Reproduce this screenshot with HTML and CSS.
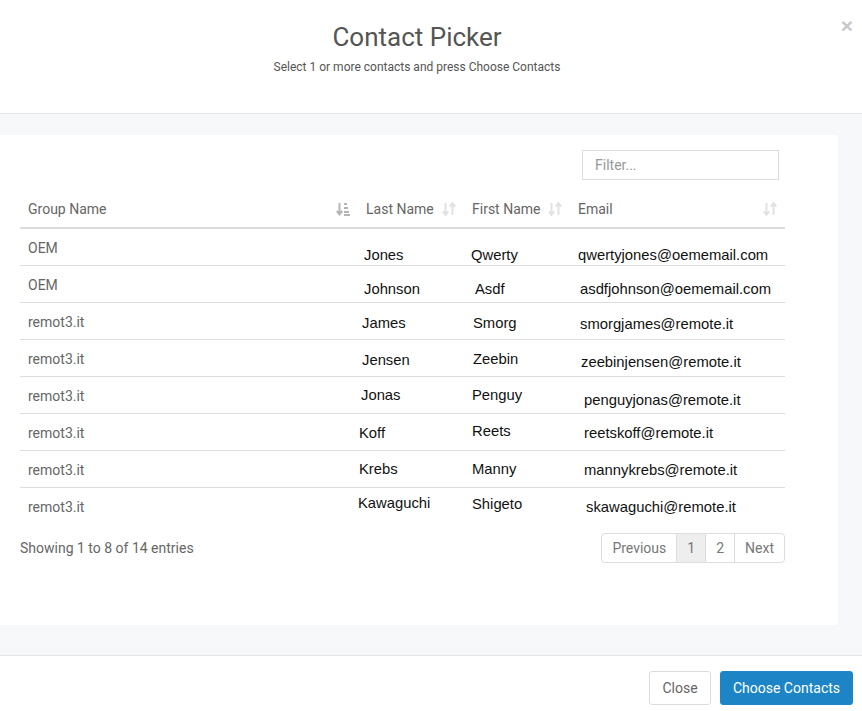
FILE: index.html
```html
<!DOCTYPE html>
<html>
<head>
<meta charset="utf-8">
<link rel="stylesheet" href="styles.css">
</head>
<body>
<div class="modal">
  <header class="modal-header">
    <h1 class="title">Contact Picker</h1>
    <p class="subtitle">Select 1 or more contacts and press Choose Contacts</p>
    <span class="close-x">&times;</span>
  </header>
  <main class="modal-body">
    <section class="panel">
      <div class="filter-row">
        <input class="filter" type="text" placeholder="Filter...">
      </div>
      <div class="grid">
        <div class="row head">
          <div class="th"><span>Group Name</span>
            <svg class="sort active" viewBox="0 0 14 14" width="14" height="14"><path d="M3.5 1v11M0.8 9l2.7 3.3L6.2 9" fill="none" stroke="currentColor" stroke-width="2"/><rect x="8" y="1" width="3" height="2" fill="currentColor"/><rect x="8" y="5" width="4" height="2" fill="currentColor"/><rect x="8" y="9" width="5" height="2" fill="currentColor"/><rect x="8" y="12" width="6" height="2" fill="currentColor"/></svg>
          </div>
          <div class="th"><span>Last Name</span>
            <svg class="sort" viewBox="0 0 14 14" width="14" height="14"><path d="M3.5 1v11.5M0.8 9.5l2.7 3.3L6.2 9.5M10.5 13V1.5M7.8 4.5l2.7-3.3 2.7 3.3" fill="none" stroke="currentColor" stroke-width="2"/></svg>
          </div>
          <div class="th"><span>First Name</span>
            <svg class="sort" viewBox="0 0 14 14" width="14" height="14"><path d="M3.5 1v11.5M0.8 9.5l2.7 3.3L6.2 9.5M10.5 13V1.5M7.8 4.5l2.7-3.3 2.7 3.3" fill="none" stroke="currentColor" stroke-width="2"/></svg>
          </div>
          <div class="th"><span>Email</span>
            <svg class="sort" viewBox="0 0 14 14" width="14" height="14"><path d="M3.5 1v11.5M0.8 9.5l2.7 3.3L6.2 9.5M10.5 13V1.5M7.8 4.5l2.7-3.3 2.7 3.3" fill="none" stroke="currentColor" stroke-width="2"/></svg>
          </div>
        </div>
        <div class="row r1"><div class="td grp">OEM</div><div class="td last">Jones</div><div class="td first">Qwerty</div><div class="td email">qwertyjones@oememail.com</div></div>
        <div class="row r2"><div class="td grp">OEM</div><div class="td last">Johnson</div><div class="td first">Asdf</div><div class="td email">asdfjohnson@oememail.com</div></div>
        <div class="row r3"><div class="td grp">remot3.it</div><div class="td last">James</div><div class="td first">Smorg</div><div class="td email">smorgjames@remote.it</div></div>
        <div class="row r4"><div class="td grp">remot3.it</div><div class="td last">Jensen</div><div class="td first">Zeebin</div><div class="td email">zeebinjensen@remote.it</div></div>
        <div class="row r5"><div class="td grp">remot3.it</div><div class="td last">Jonas</div><div class="td first">Penguy</div><div class="td email">penguyjonas@remote.it</div></div>
        <div class="row r6"><div class="td grp">remot3.it</div><div class="td last">Koff</div><div class="td first">Reets</div><div class="td email">reetskoff@remote.it</div></div>
        <div class="row r7"><div class="td grp">remot3.it</div><div class="td last">Krebs</div><div class="td first">Manny</div><div class="td email">mannykrebs@remote.it</div></div>
        <div class="row r8"><div class="td grp">remot3.it</div><div class="td last">Kawaguchi</div><div class="td first">Shigeto</div><div class="td email">skawaguchi@remote.it</div></div>
      </div>
      <div class="info-row">
        <div class="info">Showing 1 to 8 of 14 entries</div>
        <nav class="pager">
          <span class="pg">Previous</span>
          <span class="pg current">1</span>
          <span class="pg">2</span>
          <span class="pg">Next</span>
        </nav>
      </div>
    </section>
  </main>
  <footer class="modal-footer">
    <button class="btn btn-default">Close</button>
    <button class="btn btn-primary">Choose Contacts</button>
  </footer>
</div>
</body>
</html>
```

FILE: styles.css
```css
* { box-sizing: border-box; }
html, body { margin: 0; padding: 0; background: #fff; }
body { font-family: Roboto, "Liberation Sans", sans-serif; color: #666; width: 862px; height: 711px; overflow: hidden; }

.modal-header {
  position: relative;
  height: 114px;
  border-bottom: 1px solid #e5e5e5;
  text-align: center;
  padding: 21px 28px 0 0;
}
.title { margin: 0; font-size: 26px; font-weight: 400; line-height: 32px; color: #555; }
.subtitle { margin: 6px 0 0; font-size: 12px; line-height: 16px; color: #555; }
.close-x {
  position: absolute; right: 9px; top: 14px;
  font-size: 21px; font-weight: 700; line-height: 24px;
  color: #c8c8c8; font-family: "Liberation Sans", Arial, sans-serif;
}

.modal-body {
  background: #f7f8fa;
  padding: 21px 24px 30px 0;
  border-bottom: 1px solid #e5e5e5;
}
.panel {
  background: #fff;
  height: 490px;
  padding: 15px 53px 0 20px;
}
.filter-row { display: flex; justify-content: flex-end; padding-right: 6px; }
.filter {
  width: 197px; height: 30px;
  border: 1px solid #dcdcdc; border-radius: 0;
  padding: 0 12px; font-family: Roboto, sans-serif; font-size: 14px; color: #555;
  outline: none;
}
.filter::placeholder { color: #999; }

.grid { margin-top: 12px; width: 765px; }
.row {
  display: grid;
  grid-template-columns: 338px 106px 106px 215px;
  height: 37px;
  border-bottom: 1px solid #ddd;
}
.row.r8 { border-bottom: none; }
.row.head { height: 37px; padding-bottom: 1px; border-bottom: 2px solid #ddd; }
.th {
  display: flex; align-items: center; justify-content: space-between;
  padding: 0 8px; font-size: 14px; color: #666;
}
.sort { color: #e2e2e2; flex: none; }
.sort.active { color: #b5b5b5; }

.td { font-family: "Liberation Sans", Arial, sans-serif; font-size: 14.8px; line-height: 18px; color: #111; white-space: nowrap; }
.td.grp { font-family: Roboto, sans-serif; font-size: 14px; line-height: 20px; color: #666; padding: 9px 0 0 8px; }

.r1 .last { padding: 17px 0 0 6px; } .r1 .first { padding: 17px 0 0 7px; } .r1 .email { padding: 17px 0 0 8px; }
.r2 .last { padding: 14px 0 0 6px; } .r2 .first { padding: 14px 0 0 11px; } .r2 .email { padding: 14px 0 0 10px; }
.r3 .last { padding: 11px 0 0 4px; } .r3 .first { padding: 11px 0 0 9px; } .r3 .email { padding: 12px 0 0 10px; }
.r4 .last { padding: 11px 0 0 4px; } .r4 .first { padding: 10px 0 0 9px; } .r4 .email { padding: 13px 0 0 11px; }
.r5 .last { padding: 9px 0 0 3px; } .r5 .first { padding: 9px 0 0 8px; } .r5 .email { padding: 14px 0 0 14px; }
.r6 .last { padding: 10px 0 0 1px; } .r6 .first { padding: 8px 0 0 8px; } .r6 .email { padding: 10px 0 0 14px; }
.r7 .last { padding: 9px 0 0 1px; } .r7 .first { padding: 9px 0 0 8px; } .r7 .email { padding: 10px 0 0 14px; }
.r8 .last { padding: 6px 0 0 0; } .r8 .first { padding: 7px 0 0 8px; } .r8 .email { padding: 10px 0 0 16px; }

.info-row { display: flex; justify-content: space-between; align-items: center; width: 765px; margin-top: 8px; }
.info { font-size: 14px; color: #666; }
.pager { display: flex; border: 1px solid #ddd; border-radius: 4px; height: 30px; overflow: hidden; }
.pg { display: flex; align-items: center; padding: 0 10px; font-size: 14px; color: #777; border-left: 1px solid #ddd; }
.pg:first-child { border-left: none; }
.pg.current { background: #eee; color: #777; }

.modal-footer { display: flex; justify-content: flex-end; gap: 9px; padding: 15px 9px 0 0; }
.btn { height: 34px; border-radius: 3px; font-family: Roboto, sans-serif; font-size: 14px; padding: 0; cursor: pointer; white-space: nowrap; }
.btn-default { background: #fff; color: #666; border: 1px solid #ddd; width: 62px; }
.btn-primary { background: #1d84c6; color: #fff; border: 1px solid #1d84c6; width: 133px; }
```
